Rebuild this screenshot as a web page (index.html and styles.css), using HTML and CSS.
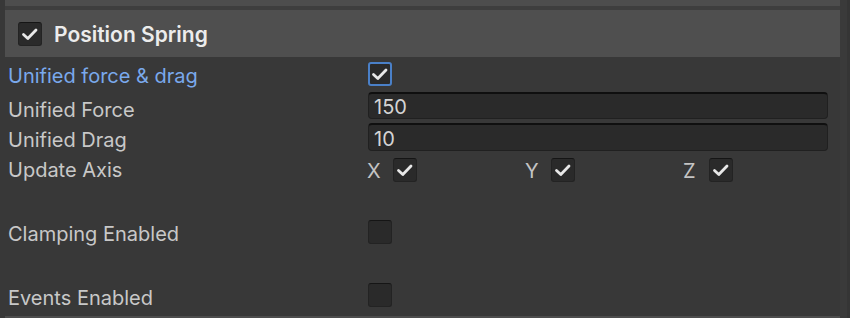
FILE: index.html
```html
<!DOCTYPE html>
<html>
<head>
<meta charset="utf-8">
<link rel="stylesheet" href="styles.css">
</head>
<body>
<div class="page">
  <div class="main">
    <div class="topbar"></div>
    <div class="sep"></div>
    <div class="header">
      <span class="cb cb-head"><svg viewBox="0 0 24 24"><path d="M5.5 12.5 L9.8 16.5 L18 8"/></svg></span>
      <span class="title">Position Spring</span>
    </div>
    <div class="form">
      <div class="row row-1">
        <span class="label label-blue lift-1">Unified force &amp; drag</span>
        <div class="ctrl"><span class="cb cb-focus"><svg viewBox="0 0 24 24"><path d="M5.5 12.5 L9.8 16.5 L18 8"/></svg></span></div>
      </div>
      <div class="row row-2">
        <span class="label lift-2">Unified Force</span>
        <div class="ctrl"><div class="field field-a">150</div></div>
      </div>
      <div class="row row-3">
        <span class="label lift-3">Unified Drag</span>
        <div class="ctrl"><div class="field field-b">10</div></div>
      </div>
      <div class="row row-4">
        <span class="label lift-4">Update Axis</span>
        <div class="ctrl axes">
          <div class="axis"><span class="axis-l">X</span><span class="cb"><svg viewBox="0 0 24 24"><path d="M5.5 12.5 L9.8 16.5 L18 8"/></svg></span></div>
          <div class="axis"><span class="axis-l">Y</span><span class="cb"><svg viewBox="0 0 24 24"><path d="M5.5 12.5 L9.8 16.5 L18 8"/></svg></span></div>
          <div class="axis"><span class="axis-l">Z</span><span class="cb"><svg viewBox="0 0 24 24"><path d="M5.5 12.5 L9.8 16.5 L18 8"/></svg></span></div>
        </div>
      </div>
      <div class="row row-5">
        <span class="label lift-5">Clamping Enabled</span>
        <div class="ctrl"><span class="cb"></span></div>
      </div>
      <div class="row row-6">
        <span class="label lift-6">Events Enabled</span>
        <div class="ctrl"><span class="cb"></span></div>
      </div>
    </div>
    <div class="bottomline"></div>
  </div>
  <div class="scroll"><div class="scroll-line"></div></div>
</div>
</body>
</html>
```
FILE: styles.css
```css
html, body {
  margin: 0;
  padding: 0;
  background: #383838;
}
body {
  font-family: Inter, "Noto Sans", sans-serif;
  font-size: 20px;
  color: #c8c8c8;
}
.page {
  display: flex;
  width: 850px;
  height: 318px;
  overflow: hidden;
  background: #383838;
}
.main {
  width: 835px;
  padding-left: 5px;
  display: flex;
  flex-direction: column;
}
.topbar {
  height: 6px;
  background: #4d4d4d;
}
.sep {
  height: 4px;
  background: #3e3e3e;
}
.header {
  height: 47px;
  background: #4f4f4f;
  display: flex;
  align-items: center;
  padding-left: 13px;
  gap: 12px;
}
.title {
  font-weight: 600;
  font-size: 21px;
  color: #ececec;
  padding-top: 2px;
}
.cb-head {
  margin-top: 1px;
}
.form {
  display: flex;
  flex-direction: column;
  padding-left: 3px;
  padding-top: 1px;
}
.row {
  display: flex;
  align-items: center;
}
.row-1 { height: 32px; }
.row-2 { height: 31px; }
.row-3 { height: 32px; }
.row-4 { height: 33px; }
.row-5 { height: 32px; margin-top: 30px; }
.row-6 { height: 32px; margin-top: 31px; }
.label {
  width: 360px;
  white-space: nowrap;
}
.label-blue { color: #7aa9ec; }
.lift-1 { padding-top: 3px; }
.lift-2 { padding-top: 8px; }
.lift-3 { padding-top: 6px; }
.lift-4 { padding-top: 1px; }
.lift-5 { padding-top: 4px; }
.lift-6 { padding-top: 5px; }
.ctrl {
  flex: 1;
  display: flex;
  align-items: center;
  padding-right: 12px;
}
.cb {
  width: 24px;
  height: 24px;
  box-sizing: border-box;
  border-radius: 3px;
  background: #2a2a2a;
  border: 1px solid #232323;
  border-top-color: #151515;
  display: inline-flex;
  align-items: center;
  justify-content: center;
  flex: none;
}
.cb svg {
  width: 24px;
  height: 24px;
  flex: none;
  fill: none;
  stroke: #e8e8e8;
  stroke-width: 2.8;
  stroke-linecap: round;
  stroke-linejoin: round;
}
.cb-focus {
  border: 2px solid #4a80c8;
}
.field {
  flex: 1;
  box-sizing: border-box;
  background: #2a2a2a;
  border: 1px solid #202020;
  border-top: 2px solid #0f0f0f;
  border-radius: 4px;
  padding-left: 5px;
  color: #d4d4d4;
  display: flex;
  align-items: center;
}
.field-a { height: 27px; padding-top: 2px; }
.field-b { height: 28px; padding-top: 2px; }
.axes {
  display: grid;
  grid-template-columns: 158px 158px 1fr;
}
.axis {
  display: flex;
  align-items: center;
  margin-left: -1px;
}
.axis-l {
  width: 26px;
  padding-top: 3px;
  color: #c4c4c4;
}
.bottomline {
  margin-top: 5px;
  height: 2px;
  background: #4d4d4d;
}
.scroll {
  width: 10px;
  display: flex;
  justify-content: flex-end;
  background: #3a3a3a;
}
.scroll-line {
  width: 3px;
  background: #353535;
}
```
